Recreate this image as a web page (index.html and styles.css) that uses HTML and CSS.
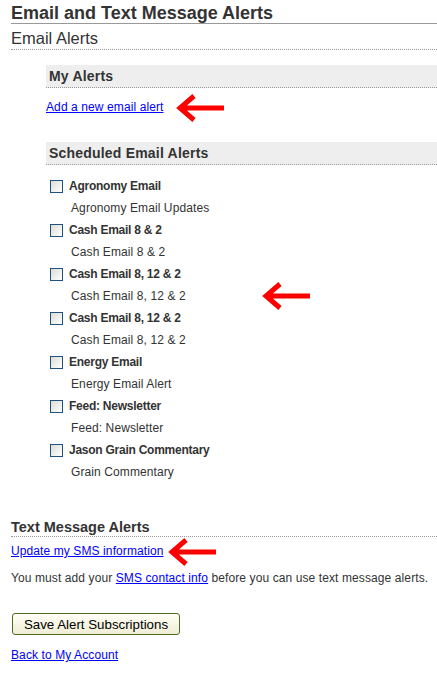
FILE: index.html
```html
<!DOCTYPE html>
<html lang="en">
<head>
    <meta charset="UTF-8">
    <meta name="viewport" content="width=device-width, initial-scale=1.0">
    <title>Email and Text Message Alerts</title>
    <link rel="stylesheet" href="styles.css">
</head>
<body>
    <div class="page">
        <h1 class="page-title">Email and Text Message Alerts</h1>
        <h2 class="section-title">Email Alerts</h2>

        <div class="alerts-block">
            <h3 class="block-title">My Alerts</h3>
            <div class="link-row">
                <a href="#">Add a new email alert</a>
                <svg class="arrow arrow-add" width="50" height="28" viewBox="0 0 50 28"><path d="M50 14H6M20 2L6 14L20 26" fill="none" stroke="#f00" stroke-width="5"/></svg>
            </div>

            <h3 class="block-title block-title-scheduled">Scheduled Email Alerts</h3>
            <ul class="alert-list">
                <li>
                    <label class="alert-label"><input type="checkbox" class="checkbox">Agronomy Email</label>
                    <div class="alert-desc">Agronomy Email Updates</div>
                </li>
                <li>
                    <label class="alert-label"><input type="checkbox" class="checkbox">Cash Email 8 &amp; 2</label>
                    <div class="alert-desc">Cash Email 8 &amp; 2</div>
                </li>
                <li>
                    <label class="alert-label"><input type="checkbox" class="checkbox">Cash Email 8, 12 &amp; 2</label>
                    <div class="alert-desc">
                        <span>Cash Email 8, 12 &amp; 2</span>
                        <svg class="arrow arrow-list" width="50" height="28" viewBox="0 0 50 28"><path d="M50 14H6M20 2L6 14L20 26" fill="none" stroke="#f00" stroke-width="5"/></svg>
                    </div>
                </li>
                <li>
                    <label class="alert-label"><input type="checkbox" class="checkbox">Cash Email 8, 12 &amp; 2</label>
                    <div class="alert-desc">Cash Email 8, 12 &amp; 2</div>
                </li>
                <li>
                    <label class="alert-label"><input type="checkbox" class="checkbox">Energy Email</label>
                    <div class="alert-desc">Energy Email Alert</div>
                </li>
                <li>
                    <label class="alert-label"><input type="checkbox" class="checkbox">Feed: Newsletter</label>
                    <div class="alert-desc">Feed: Newsletter</div>
                </li>
                <li>
                    <label class="alert-label"><input type="checkbox" class="checkbox">Jason Grain Commentary</label>
                    <div class="alert-desc">Grain Commentary</div>
                </li>
            </ul>
        </div>

        <h2 class="sms-title">Text Message Alerts</h2>
        <div class="link-row sms-row">
            <a href="#">Update my SMS information</a>
            <svg class="arrow arrow-sms" width="50" height="28" viewBox="0 0 50 28"><path d="M50 14H6M20 2L6 14L20 26" fill="none" stroke="#f00" stroke-width="5"/></svg>
        </div>
        <p class="sms-note">You must add your <a href="#">SMS contact info</a> before you can use text message alerts.</p>

        <button class="save-button">Save Alert Subscriptions</button>

        <div class="back-link"><a href="#">Back to My Account</a></div>
    </div>
</body>
</html>
```

FILE: styles.css
```css
body {
    margin: 0;
    background-color: #fff;
    color: #333;
    font-family: "Liberation Sans", Arial, sans-serif;
    font-size: 12px;
    letter-spacing: 0.1px;
}

a {
    color: #00f;
}

.page {
    padding: 3px 0 20px 11px;
}

.page-title {
    margin: 0;
    font-size: 18px;
    line-height: 20px;
    font-weight: bold;
    letter-spacing: 0;
    border-bottom: 1px solid #999;
}

.section-title {
    margin: 4px 0 0;
    font-size: 16.5px;
    font-weight: normal;
    line-height: 20px;
    letter-spacing: 0;
    padding-bottom: 1px;
    border-bottom: 1px dotted #999;
}

.alerts-block {
    margin: 15px 0 0 35px;
}

.block-title {
    margin: 0;
    padding: 2px 3px;
    background-color: #eee;
    font-size: 14px;
    font-weight: bold;
    line-height: 18px;
    letter-spacing: 0.2px;
    border-bottom: 1px dotted #999;
}

.block-title-scheduled {
    margin-top: 27px;
}

.link-row {
    display: flex;
    align-items: center;
    margin-top: 12px;
    line-height: 15px;
}

.arrow {
    flex: none;
    margin: -7px 0;
}

.arrow-add {
    margin-left: 10px;
}

.arrow-list {
    margin-left: 74px;
}

.arrow-sms {
    margin-left: 2px;
}

.alert-list {
    list-style: none;
    margin: 10px 0 0;
    padding: 0 0 0 4px;
}

.alert-label {
    display: flex;
    align-items: center;
    gap: 6px;
    height: 22px;
    font-weight: bold;
    letter-spacing: -0.25px;
}

.checkbox {
    appearance: none;
    -webkit-appearance: none;
    width: 13px;
    height: 13px;
    margin: 0;
    border: 1px solid #1c5180;
    background: linear-gradient(135deg, #dcdcd5, #fff);
}

.alert-desc {
    display: flex;
    align-items: center;
    height: 22px;
    line-height: 22px;
    padding-left: 21px;
}

.sms-title {
    margin: 36px 0 0;
    font-size: 14.5px;
    font-weight: bold;
    line-height: 17px;
    letter-spacing: 0;
    border-bottom: 1px dotted #999;
}

.sms-row {
    margin-top: 7px;
}

.sms-note {
    margin: 12px 0 0;
    line-height: 15px;
}

.save-button {
    display: block;
    width: 168px;
    height: 22px;
    margin: 27px 0 0 1px;
    padding: 0;
    border: 1px solid #4f6b22;
    border-radius: 3px;
    background: linear-gradient(#fffff6, #efedd6);
    color: #000;
    font-family: "Liberation Sans", Arial, sans-serif;
    font-size: 13.3px;
    letter-spacing: 0;
}

.back-link {
    margin-top: 13px;
    line-height: 15px;
}
```
